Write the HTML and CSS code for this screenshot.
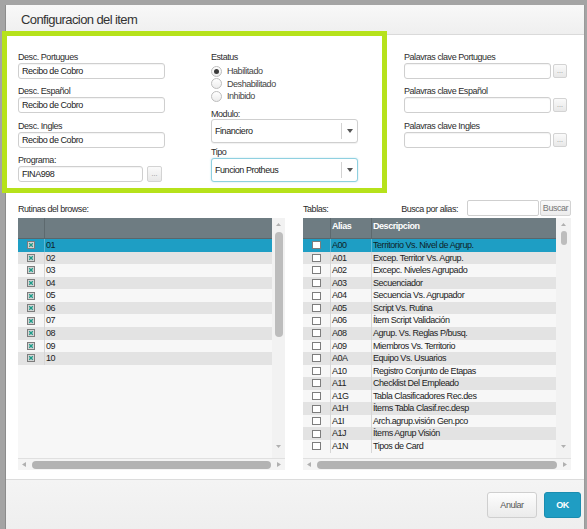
FILE: index.html
```html
<!DOCTYPE html>
<html>
<head>
  <title>Configuracion del item</title>
  <link rel="stylesheet" href="styles.css">
</head>
<body>

  <div class="dialog">
    <div class="dialog-header">
      <h1 class="dialog-title">Configuracion del item</h1>
    </div>

    <div class="dialog-body">
      <div class="form-grid">
        <div class="col">
          <div class="field">
            <label class="field-label">Desc. Portugues</label>
            <input type="text" class="text-input" value="Recibo de Cobro">
          </div>
          <div class="field">
            <label class="field-label">Desc. Español</label>
            <input type="text" class="text-input" value="Recibo de Cobro">
          </div>
          <div class="field">
            <label class="field-label">Desc. Ingles</label>
            <input type="text" class="text-input" value="Recibo de Cobro">
          </div>
          <div class="field">
            <label class="field-label">Programa:</label>
            <div class="input-row program-row">
              <input type="text" class="text-input" value="FINA998">
              <button class="dots-btn">...</button>
            </div>
          </div>
        </div>

        <div class="col">
          <div class="field-label">Estatus</div>
          <div class="radio-list">
            <div class="radio-row"><span class="radio checked"></span>Habilitado</div>
            <div class="radio-row"><span class="radio"></span>Deshabilitado</div>
            <div class="radio-row"><span class="radio"></span>Inhibido</div>
          </div>
          <div class="field-label tight">Modulo:</div>
          <div class="select">
            <span class="select-value">Financiero</span>
            <span class="select-arrow"><svg width="6" height="4" viewBox="0 0 6 4"><path d="M0 0h6L3 4z" fill="#555"/></svg></span>
          </div>
          <div class="field-label tipo-label">Tipo</div>
          <div class="select focused">
            <span class="select-value">Funcion Protheus</span>
            <span class="select-arrow"><svg width="6" height="4" viewBox="0 0 6 4"><path d="M0 0h6L3 4z" fill="#555"/></svg></span>
          </div>
        </div>

        <div class="col">
          <div class="field">
            <label class="field-label">Palavras clave Portugues</label>
            <div class="input-row keyword-row">
              <input type="text" class="text-input">
              <button class="dots-btn">...</button>
            </div>
          </div>
          <div class="field">
            <label class="field-label">Palavras clave Español</label>
            <div class="input-row keyword-row">
              <input type="text" class="text-input">
              <button class="dots-btn">...</button>
            </div>
          </div>
          <div class="field">
            <label class="field-label">Palavras clave Ingles</label>
            <div class="input-row keyword-row">
              <input type="text" class="text-input">
              <button class="dots-btn">...</button>
            </div>
          </div>
        </div>
      </div>

      <div class="tables">
        <div class="pane pane-left">
          <div class="pane-bar">Rutinas del browse:</div>
          <div class="grid-table browse-table">
            <div class="table-main">
              <div class="thead">
                <div class="th cell-check"></div>
                <div class="th"></div>
              </div>
              <div class="tbody" id="browseRows"></div>
            </div>
            <div class="vscroll">
              <span class="arrow"><svg width="5" height="3" viewBox="0 0 5 3"><path d="M0 3h5L2.5 0z" fill="#b0b0b0"/></svg></span>
              <span class="vthumb"></span>
              <span class="spacer"></span>
              <span class="arrow"><svg width="5" height="3" viewBox="0 0 5 3"><path d="M0 0h5L2.5 3z" fill="#b0b0b0"/></svg></span>
            </div>
            <div class="hscroll">
              <svg width="4" height="5" viewBox="0 0 4 5"><path d="M4 0v5L0 2.5z" fill="#b0b0b0"/></svg>
              <span class="hthumb"></span>
              <svg width="4" height="5" viewBox="0 0 4 5"><path d="M0 0v5l4-2.5z" fill="#b0b0b0"/></svg>
            </div>
          </div>
        </div>

        <div class="pane pane-right">
          <div class="pane-bar">
            <span class="bar-title">Tablas:</span>
            <span class="search-label">Busca por alias:</span>
            <input type="text" class="search-input">
            <button class="search-btn">Buscar</button>
          </div>
          <div class="grid-table tables-table">
            <div class="table-main">
              <div class="thead">
                <div class="th cell-check"></div>
                <div class="th cell-alias">Alias</div>
                <div class="th">Descripcion</div>
              </div>
              <div class="tbody" id="tableRows"></div>
            </div>
            <div class="vscroll">
              <span class="arrow"><svg width="5" height="3" viewBox="0 0 5 3"><path d="M0 3h5L2.5 0z" fill="#b0b0b0"/></svg></span>
              <span class="vthumb"></span>
              <span class="spacer"></span>
              <span class="arrow"><svg width="5" height="3" viewBox="0 0 5 3"><path d="M0 0h5L2.5 3z" fill="#b0b0b0"/></svg></span>
            </div>
            <div class="hscroll">
              <svg width="4" height="5" viewBox="0 0 4 5"><path d="M4 0v5L0 2.5z" fill="#b0b0b0"/></svg>
              <span class="hthumb"></span>
              <svg width="4" height="5" viewBox="0 0 4 5"><path d="M0 0v5l4-2.5z" fill="#b0b0b0"/></svg>
            </div>
          </div>
        </div>
      </div>
    </div>

    <div class="dialog-footer">
      <button class="btn">Anular</button>
      <button class="btn btn-primary">OK</button>
    </div>
  </div>

  <div class="highlight"></div>

  <script>
    const checkIcon = '<svg width="8" height="8" viewBox="0 0 8 8"><rect x=".5" y=".5" width="7" height="7" fill="#d6d6d6" stroke="#7c7c7c"/><path d="M2.2 2.2l3.6 3.6M5.8 2.2L2.2 5.8" stroke="#1c9a88" stroke-width="1.3"/></svg>';

    const routines = ["01", "02", "03", "04", "05", "06", "07", "08", "09", "10"];
    let html = "";
    routines.forEach(function (r, i) {
      html += '<div class="tr' + (i === 0 ? ' selected' : '') + '">' +
        '<div class="td cell-check">' + checkIcon + '</div>' +
        '<div class="td">' + r + '</div></div>';
    });
    document.getElementById("browseRows").innerHTML = html;

    const tables = [
      ["A00", "Territorio Vs. Nivel de Agrup."],
      ["A01", "Excep. Territor Vs. Agrup."],
      ["A02", "Excepc. Niveles Agrupado"],
      ["A03", "Secuenciador"],
      ["A04", "Secuencia Vs. Agrupador"],
      ["A05", "Script Vs. Rutina"],
      ["A06", "Ítem Script Validación"],
      ["A08", "Agrup. Vs. Reglas P/busq."],
      ["A09", "Miembros Vs. Territorio"],
      ["A0A", "Equipo Vs. Usuarios"],
      ["A10", "Registro Conjunto de Etapas"],
      ["A11", "Checklist Del Empleado"],
      ["A1G", "Tabla Clasificadores Rec.des"],
      ["A1H", "Ítems Tabla Clasif.rec.desp"],
      ["A1I", "Arch.agrup.visión Gen.pco"],
      ["A1J", "Ítems Agrup Visión"],
      ["A1N", "Tipos de Card"]
    ];
    html = "";
    tables.forEach(function (t, i) {
      html += '<div class="tr' + (i === 0 ? ' selected' : '') + '">' +
        '<div class="td cell-check"><span class="checkbox"></span></div>' +
        '<div class="td cell-alias">' + t[0] + '</div>' +
        '<div class="td">' + t[1] + '</div></div>';
    });
    document.getElementById("tableRows").innerHTML = html;
  </script>

</body>
</html>
```

FILE: styles.css
```css
body {
  margin: 0;
  background: #a4a4a4;
  font-family: "Liberation Sans", Arial, sans-serif;
  font-size: 9px;
  letter-spacing: -0.45px;
  color: #2b2b2b;
  height: 529px;
  overflow: hidden;
}

.dialog {
  margin: 5px 0 0 5px;
  width: 578px;
  height: 530px;
  background: #fff;
  border-left: 1px solid #8c8c8c;
  border-right: 1px solid #9a9a9a;
  display: flex;
  flex-direction: column;
}

.dialog-header {
  height: 29px;
  flex: 0 0 29px;
  border-bottom: 1px solid #dadada;
  background: linear-gradient(#f8f8f8, #efefef);
  display: flex;
  align-items: center;
  padding-left: 15px;
}

.dialog-title {
  margin: 0;
  font-size: 13px;
  font-weight: normal;
  letter-spacing: -0.6px;
  color: #333;
}

.dialog-body {
  flex: 0 0 444px;
  box-sizing: border-box;
  padding: 17px 0 0 12px;
}

/* form */

.form-grid {
  display: grid;
  grid-template-columns: 147px 147px 164px;
  column-gap: 46px;
  align-items: start;
}

.field-label {
  display: block;
  height: 10px;
  line-height: 10px;
  margin-bottom: 1px;
  color: #2e2e2e;
}

.field-label.tight {
  margin-bottom: 0;
}

.tipo-label {
  margin-top: 4px;
}

.field {
  margin-bottom: 7.33px;
}

.field:last-child {
  margin-bottom: 0;
}

.text-input {
  display: block;
  width: 100%;
  height: 16px;
  box-sizing: border-box;
  padding: 0 3px;
  border: 1px solid #cfcfcf;
  border-radius: 3px;
  background: #fff;
  box-shadow: inset 0 1px 1px rgba(0, 0, 0, 0.05);
  font: inherit;
  letter-spacing: inherit;
  color: #222;
  outline: none;
}

.input-row {
  display: flex;
  align-items: center;
}

.program-row {
  gap: 4px;
}

.program-row .text-input {
  width: 125px;
}

.program-row .dots-btn {
  width: 15px;
  height: 16px;
}

.keyword-row {
  gap: 2px;
}

.keyword-row .text-input {
  width: 147px;
}

.dots-btn {
  width: 14px;
  height: 14px;
  padding: 0;
  border: 1px solid #d3d3d3;
  border-radius: 2px;
  background: linear-gradient(#fafafa, #e8e8e8);
  font: inherit;
  font-size: 7px;
  letter-spacing: 0;
  color: #888;
  line-height: 8px;
}

.radio-list {
  margin: 2.75px 0 6.75px;
}

.radio-row {
  display: flex;
  align-items: center;
  gap: 5px;
  height: 12.5px;
  color: #444;
}

.radio {
  width: 11px;
  height: 11px;
  box-sizing: border-box;
  border: 1px solid #bdbdbd;
  border-radius: 50%;
  background: linear-gradient(#fff, #ececec);
  display: flex;
  align-items: center;
  justify-content: center;
}

.radio.checked::after {
  content: "";
  width: 5px;
  height: 5px;
  border-radius: 50%;
  background: #3a3a3a;
}

.select {
  display: flex;
  height: 24px;
  box-sizing: border-box;
  border: 1px solid #cfcfcf;
  border-radius: 3px;
  background: #fff;
  box-shadow: 0 1px 1px rgba(0, 0, 0, 0.06);
  color: #222;
}

.select.focused {
  border-color: #8fd0e0;
  box-shadow: 0 0 2px rgba(60, 170, 200, 0.35);
}

.select-value {
  flex: 1;
  align-self: center;
  padding-left: 3px;
}

.select-arrow {
  width: 15px;
  margin: 3px 0;
  border-left: 1px solid #d2d2d2;
  display: flex;
  align-items: center;
  justify-content: center;
}

/* tables */

.tables {
  display: flex;
  gap: 18px;
  margin-top: 18px;
}

.pane-left {
  width: 267px;
}

.pane-right {
  width: 268px;
}

.pane-bar {
  display: flex;
  align-items: center;
  height: 16px;
  margin-bottom: 2px;
  padding-top: 1px;
  box-sizing: border-box;
}

.bar-title {
  flex: 1;
}

.search-label {
  margin-right: 9px;
}

.search-input {
  width: 72px;
  height: 16px;
  box-sizing: border-box;
  border: 1px solid #cfcfcf;
  border-radius: 2px;
  margin-top: -1px;
  outline: none;
}

.search-btn {
  width: 31px;
  height: 16px;
  margin: -1px 0 0 1px;
  padding: 0;
  border: 1px solid #d3d3d3;
  border-radius: 2px;
  background: linear-gradient(#fafafa, #ececec);
  font: inherit;
  letter-spacing: inherit;
  color: #777;
}

.grid-table {
  height: 252px;
  display: grid;
  grid-template-rows: 1fr 12px;
}

.browse-table {
  grid-template-columns: 1fr 13px;
}

.tables-table {
  grid-template-columns: 1fr 15px;
}

.table-main {
  background: #f7f7f7;
  overflow: hidden;
}

.thead {
  display: flex;
  height: 21px;
  box-sizing: border-box;
  background: #6e7c82;
  border-bottom: 1px solid #5a666b;
  color: #fff;
  font-weight: bold;
}

.th {
  flex: 1;
  padding: 2px 0 0 1px;
  line-height: 12px;
}

.th + .th {
  border-left: 1px solid #5d696e;
}

.tr {
  display: flex;
  height: 12.57px;
  line-height: 12.57px;
  background: #f7f7f7;
  color: #222;
}

.tbody .tr:nth-child(even) {
  background: #e3e3e3;
}

.tbody .tr.selected {
  background: #1e9ec4;
  color: #0f1e28;
}

.td {
  flex: 1;
  padding-left: 1px;
  white-space: nowrap;
  overflow: hidden;
}

.td + .td {
  border-left: 1px solid #d6d6d6;
}

.selected .td + .td {
  border-left-color: #5bb9d6;
}

.cell-check {
  flex: 0 0 26px;
  padding: 0;
  display: flex;
  align-items: center;
  justify-content: center;
}

.tables-table .cell-check {
  flex-basis: 27px;
}

.cell-alias {
  flex: 0 0 39px;
}

.checkbox {
  width: 9px;
  height: 8px;
  box-sizing: border-box;
  border: 1px solid #7d7d7d;
  background: #fff;
}

.vscroll {
  display: flex;
  flex-direction: column;
  align-items: center;
  background: #f2f2f2;
  padding-bottom: 6px;
}

.vscroll .arrow {
  height: 12px;
  display: flex;
  align-items: center;
}

.vscroll .spacer {
  flex: 1;
}

.vthumb {
  border-radius: 4px;
  background: #bdbdbd;
}

.browse-table .vthumb {
  width: 8px;
  height: 105px;
  margin-top: 2px;
}

.tables-table .vthumb {
  width: 6px;
  height: 14px;
  margin-top: 1px;
}

.hscroll {
  grid-column: 1 / -1;
  display: flex;
  align-items: center;
  gap: 6px;
  padding: 0 4px;
  background: #f4f4f4;
  border-top: 1px solid #e0e0e0;
}

.hthumb {
  flex: 1;
  height: 8px;
  border-radius: 4px;
  background: #b3b3b3;
}

/* footer */

.dialog-footer {
  flex: 1;
  border-top: 1px solid #dcdcdc;
  background: linear-gradient(#f4f4f4, #eeeeee);
  display: flex;
  justify-content: flex-end;
  align-items: flex-start;
  gap: 7px;
  padding: 12px 3px 0 0;
}

.btn {
  width: 50px;
  height: 26px;
  border: 1px solid #cfcfcf;
  border-radius: 3px;
  background: linear-gradient(#fdfdfd, #ebebeb);
  font: inherit;
  letter-spacing: inherit;
  color: #555;
}

.btn-primary {
  width: 37px;
  background: #1f9dc3;
  border-color: #1a8db0;
  color: #fff;
  font-weight: bold;
}

.highlight {
  position: absolute;
  left: 2px;
  top: 31px;
  width: 385px;
  height: 162px;
  box-sizing: border-box;
  border: 5px solid #b6e21b;
  pointer-events: none;
}
```
